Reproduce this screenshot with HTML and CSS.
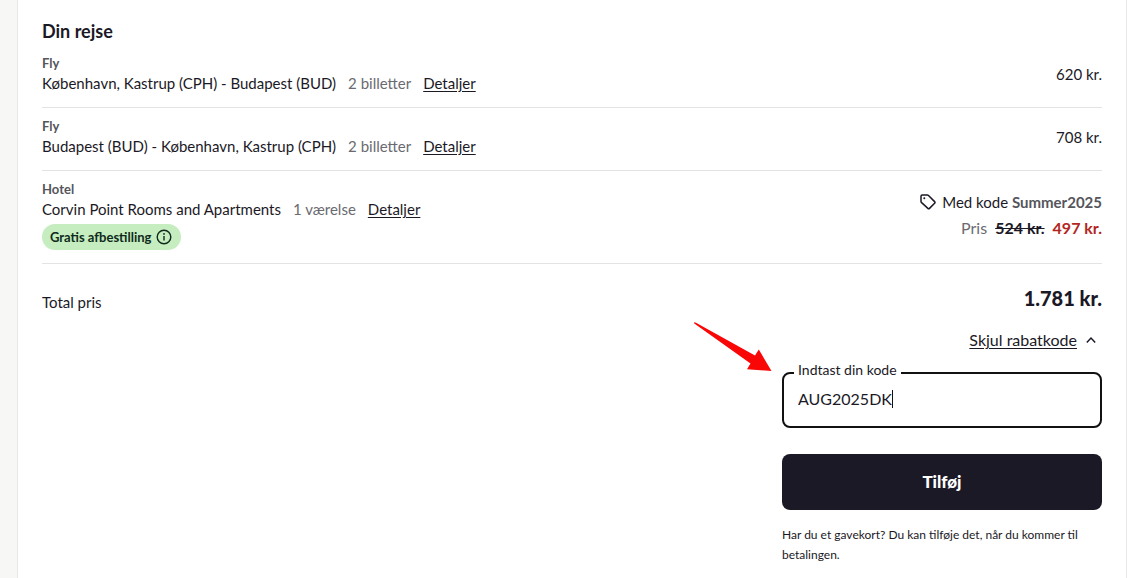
FILE: index.html
```html
<!doctype html>
<html lang="da">

	<head>
		<title>Din rejse</title>
		<meta charset="utf-8" />
		<link rel="stylesheet" href="styles.css">
	</head>

	<body>

		<main class="card">
			<h2>Din rejse</h2>

			<ul class="trip">
				<li>
					<div class="info">
						<h3>Fly</h3>
						<p>
							<span>København, Kastrup (CPH) - Budapest (BUD)</span>
							<span class="count">2 billetter</span>
							<a href="#">Detaljer</a>
						</p>
					</div>
					<div class="price">620 kr.</div>
				</li>
				<li>
					<div class="info">
						<h3>Fly</h3>
						<p>
							<span>Budapest (BUD) - København, Kastrup (CPH)</span>
							<span class="count">2 billetter</span>
							<a href="#">Detaljer</a>
						</p>
					</div>
					<div class="price">708 kr.</div>
				</li>
				<li>
					<div class="info">
						<h3>Hotel</h3>
						<p>
							<span>Corvin Point Rooms and Apartments</span>
							<span class="count">1 værelse</span>
							<a href="#">Detaljer</a>
						</p>
						<button type="button" class="badge">
							Gratis afbestilling
							<svg width="16" height="16" viewBox="0 0 16 16" fill="none" stroke="currentColor" stroke-width="1.4">
								<circle cx="8" cy="8" r="6.8" />
								<path d="M8 7V11.6" />
								<circle cx="8" cy="4.9" r="0.9" fill="currentColor" stroke="none" />
							</svg>
						</button>
					</div>
					<div class="price">
						<div class="code">
							<svg width="16" height="16" viewBox="0 0 16 16" fill="none" stroke="currentColor" stroke-width="1.5" stroke-linejoin="round">
								<path d="M1 2.2Q1 1 2.2 1H7.3Q8 1 8.5 1.5L14.6 7.6Q15.4 8.4 14.6 9.2L9.5 14.4Q8.7 15.2 7.9 14.4L1.6 8.6Q1 8.1 1 7.4Z" />
								<circle cx="4.3" cy="4.2" r="1" fill="currentColor" stroke="none" />
							</svg>
							<span>Med kode <b>Summer2025</b></span>
						</div>
						<div class="sale">
							<span class="count">Pris</span>
							<del>524 kr.</del>
							<ins>497 kr.</ins>
						</div>
					</div>
				</li>
			</ul>

			<div class="total">
				<span>Total pris</span>
				<strong>1.781 kr.</strong>
			</div>

			<form class="discount">
				<button type="button" class="toggle">
					<span>Skjul rabatkode</span>
					<svg width="12" height="8" viewBox="0 0 12 8" fill="none" stroke="currentColor" stroke-width="1.5">
						<path d="M1.8 6.4L6 2L10.2 6.4" />
					</svg>
				</button>

				<div class="field">
					<label for="code">Indtast din kode</label>
					<input id="code" type="text" value="AUG2025DK" autocomplete="off" spellcheck="false" />
					<i class="caret"></i>
					<svg class="arrow" width="78" height="50" viewBox="0 0 78 50">
						<path d="M0.5 0.3Q-0.5 1.2 1 2L56.5 41.5L53 47.2L77.5 49L64.8 27.5L61 33.6L2 0.8Z" fill="#f90606" />
					</svg>
				</div>

				<button type="submit" class="add">Tilføj</button>
				<p class="help">Har du et gavekort? Du kan tilføje det, når du kommer til betalingen.</p>
			</form>
		</main>

	</body>

</html>
```

FILE: styles.css
```css
* {
	box-sizing: border-box;
}

body {
	margin: 0;
	padding: 0 0 0 17px;
	background: #f7f7f6;
	color: #1b1926;
	font: 15px/20px Lato, "Open Sans", sans-serif;
}

h2, h3, p, ul {
	margin: 0;
	padding: 0;
}

button, input {
	padding: 0;
	border: none;
	background: none;
	color: inherit;
	font: inherit;
}

button {
	cursor: pointer;
}

a {
	color: inherit;
	text-underline-offset: 2px;
}

.card {
	min-height: 100vh;
	padding: 19px 24px 14px;
	border: solid #e8e8e8;
	border-width: 0 1px;
	background: #fff;
}

h2 {
	margin-bottom: 2px;
	font-size: 18px;
	line-height: 24px;
}

.trip li {
	display: flex;
	justify-content: space-between;
	align-items: center;
	padding: 9px 0 13px;
	border-bottom: 1px solid #e3e3e5;
	list-style: none;
}

.trip h3 {
	color: #55555b;
	font-size: 13px;
	line-height: 19px;
}

.info p {
	display: flex;
	gap: 12px;
	padding-bottom: 1px;
}

.count {
	color: #6a6a70;
}

.badge {
	display: flex;
	align-items: center;
	gap: 5px;
	height: 26px;
	margin-top: 4px;
	padding: 0 9px 0 8px;
	border-radius: 13px;
	background: #c5edbf;
	color: #0f2a1c;
	font-size: 13px;
	font-weight: bold;
}

.price {
	line-height: 26px;
	text-align: right;
}

.code {
	display: flex;
	align-items: center;
	justify-content: flex-end;
	gap: 6px;
}

.code b {
	color: #55555b;
}

.sale {
	display: flex;
	justify-content: flex-end;
	gap: 8px;
	font-size: 16px;
}

.sale del {
	font-weight: bold;
}

.sale ins {
	color: #b3261e;
	font-weight: bold;
	text-decoration: none;
}

.total {
	display: flex;
	justify-content: space-between;
	align-items: center;
	padding-top: 20px;
}

.total span {
	padding-top: 8px;
}

.total strong {
	font-size: 20px;
	font-weight: 900;
	line-height: 26px;
}

.discount {
	width: 320px;
	max-width: 100%;
	margin: 18px 0 0 auto;
}

.toggle {
	display: flex;
	align-items: center;
	gap: 8px;
	margin-left: auto;
	padding-right: 5px;
	font-size: 16px;
}

.toggle span {
	text-decoration: underline;
	text-underline-offset: 2px;
}

.field {
	position: relative;
	display: flex;
	align-items: center;
	height: 56px;
	margin-top: 22px;
	padding: 0 14px 2px;
	border: 2px solid #111;
	border-radius: 8px;
}

.field label {
	position: absolute;
	top: -14px;
	left: 10px;
	padding: 0 4px;
	background: #fff;
	font-size: 14px;
}

.field input {
	field-sizing: content;
	max-width: 100%;
	outline: none;
	caret-color: transparent;
	font-size: 16px;
}

.caret {
	width: 1px;
	height: 18px;
	background: #111;
}

.arrow {
	position: absolute;
	right: 100%;
	bottom: 100%;
	margin: 0 12px 2px 0;
}

.add {
	display: block;
	width: 100%;
	height: 56px;
	margin-top: 26px;
	border-radius: 8px;
	background: #1b1926;
	color: #fff;
	font-size: 17px;
	font-weight: 900;
}

.help {
	margin-top: 15px;
	font-size: 12px;
}
```
